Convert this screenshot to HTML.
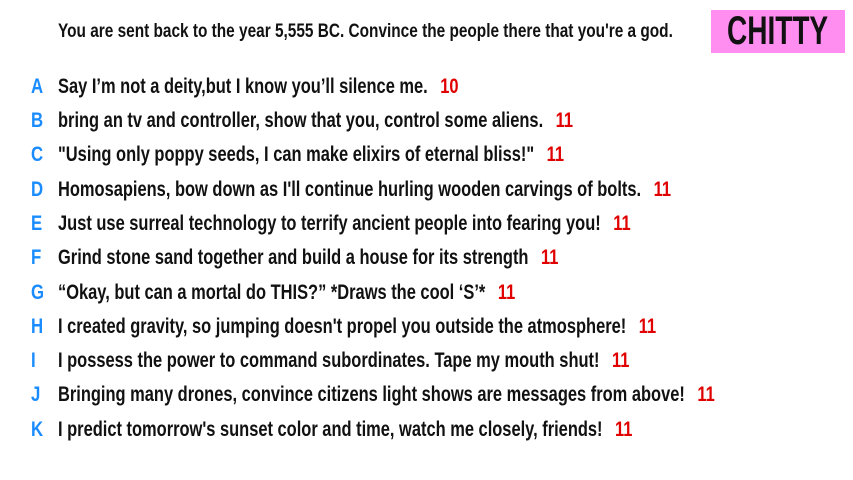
<!DOCTYPE html>
<html><head><meta charset="utf-8"><style>
body{margin:0;width:853px;height:480px;background:#fff;overflow:hidden;font-family:"Liberation Sans Narrow","Liberation Sans",sans-serif;color:#111;position:relative}
.s{position:absolute;white-space:nowrap;transform-origin:0 0;transform:scaleX(.783);font-weight:bold}
.h{left:58px;top:21px;font-size:19px;transform:scaleX(.81)}
.box{position:absolute;left:711px;top:10px;width:134px;height:43px;background:#ff8ef0}
.c{left:727px;top:9px;font-size:40px;transform:scaleX(.70)}
.row{font-size:21px}
.l{color:#1a8cff;position:absolute;font-size:21px;left:31px;transform:scaleX(.80);transform-origin:0 0;font-weight:bold}
.n{color:#e00000;margin-left:16px}
</style></head><body>
<div class="s h">You are sent back to the year 5,555 BC. Convince the people there that you're a god.</div>
<div class="box"></div>
<div class="s c">CHITTY</div>
<div class="l" style="top:75px">A</div><div class="s row" style="left:58px;top:75px">Say I’m not a deity,but I know you’ll silence me.<span class="n">10</span></div>
<div class="l" style="top:109px">B</div><div class="s row" style="left:58px;top:109px">bring an tv and controller, show that you, control some aliens.<span class="n">11</span></div>
<div class="l" style="top:143px">C</div><div class="s row" style="left:58px;top:143px">"Using only poppy seeds, I can make elixirs of eternal bliss!"<span class="n">11</span></div>
<div class="l" style="top:178px">D</div><div class="s row" style="left:58px;top:178px">Homosapiens, bow down as I'll continue hurling wooden carvings of bolts.<span class="n">11</span></div>
<div class="l" style="top:212px">E</div><div class="s row" style="left:58px;top:212px">Just use surreal technology to terrify ancient people into fearing you!<span class="n">11</span></div>
<div class="l" style="top:246px">F</div><div class="s row" style="left:58px;top:246px">Grind stone sand together and build a house for its strength<span class="n">11</span></div>
<div class="l" style="top:281px">G</div><div class="s row" style="left:58px;top:281px">“Okay, but can a mortal do THIS?” *Draws the cool ‘S’*<span class="n">11</span></div>
<div class="l" style="top:315px">H</div><div class="s row" style="left:58px;top:315px">I created gravity, so jumping doesn't propel you outside the atmosphere!<span class="n">11</span></div>
<div class="l" style="top:349px">I</div><div class="s row" style="left:58px;top:349px">I possess the power to command subordinates. Tape my mouth shut!<span class="n">11</span></div>
<div class="l" style="top:383px">J</div><div class="s row" style="left:58px;top:383px">Bringing many drones, convince citizens light shows are messages from above!<span class="n">11</span></div>
<div class="l" style="top:418px">K</div><div class="s row" style="left:58px;top:418px">I predict tomorrow's sunset color and time, watch me closely, friends!<span class="n">11</span></div>
</body></html>
